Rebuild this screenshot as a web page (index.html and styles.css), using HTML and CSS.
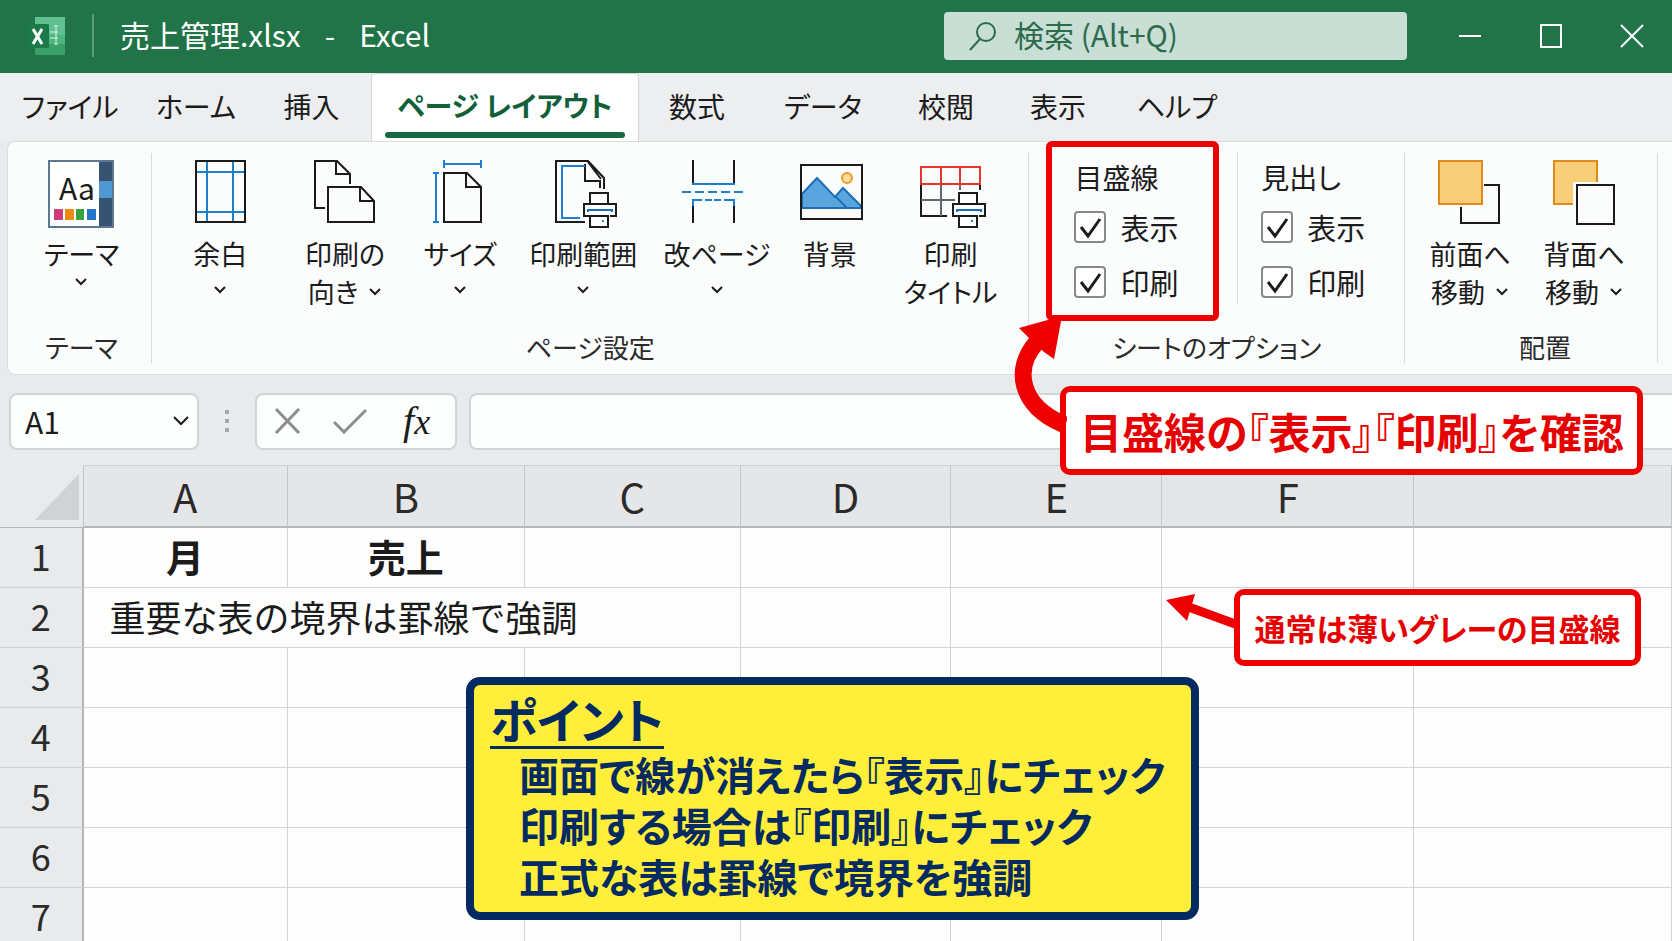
FILE: index.html
```html
<!DOCTYPE html>
<html lang="ja">
<head>
    <meta charset="UTF-8">
    <meta name="viewport" content="width=device-width, initial-scale=1.0">
    <title>売上管理.xlsx - Excel</title>
    <link rel="stylesheet" href="styles.css">
</head>
<body>
    <svg class="defs" aria-hidden="true">
        <symbol id="chevron" viewBox="0 0 14 10"><path d="M2 2l5 5 5-5" fill="none" stroke="currentColor" stroke-width="2"/></symbol>
        <symbol id="printer" viewBox="0 0 36 38">
            <path d="M8 12V2h18v10M8 25H2V13h32v12h-6M8 25h18v11H8z" fill="#fff" stroke="#1b1b1b" stroke-width="2"/>
            <path d="M6 21v-2h24v2" fill="none" stroke="#1b6fb8" stroke-width="2"/>
            <path d="M20 30h2" stroke="#2a86d1" stroke-width="2"/>
        </symbol>
    </svg>

    <header class="title-bar">
        <svg class="logo" viewBox="0 0 40 40" aria-hidden="true">
            <rect x="9" y="1" width="30" height="38" rx="1" fill="#4cb47e"/>
            <rect x="9" y="1" width="30" height="18" fill="#5fc191"/>
            <rect x="9" y="28" width="30" height="11" fill="#3a9f69"/>
            <rect x="1" y="8" width="22" height="24" rx="1" fill="#1c7a49"/>
            <path d="M30 10v18M28 10h4M28 28h4M24 16h8M24 22h8" stroke="#e0f3e8" stroke-width="1"/>
            <path d="M7 13l9 15M16 13L7 28" stroke="#fff" stroke-width="3"/>
        </svg>
        <span class="divider"></span>
        <span class="file-name">売上管理.xlsx</span>
        <span class="dash">-</span>
        <span class="app-name">Excel</span>
        <label class="search">
            <svg viewBox="0 0 30 30" aria-hidden="true"><circle cx="18" cy="11" r="9"/><path d="M12 18L2 29"/></svg>
            <input type="search" placeholder="検索 (Alt+Q)" aria-label="検索">
        </label>
        <div class="window-buttons">
            <button type="button" aria-label="最小化"><svg viewBox="0 0 24 24"><path d="M1 12h22"/></svg></button>
            <button type="button" aria-label="最大化"><svg viewBox="0 0 24 24"><path d="M2 1h20v22H2z"/></svg></button>
            <button type="button" aria-label="閉じる"><svg viewBox="0 0 24 24"><path d="M1 1l22 22M23 1L1 23"/></svg></button>
        </div>
    </header>

    <nav class="tabs">
        <button type="button">ファイル</button>
        <button type="button">ホーム</button>
        <button type="button">挿入</button>
        <button type="button" class="active">ページ レイアウト</button>
        <button type="button">数式</button>
        <button type="button">データ</button>
        <button type="button">校閲</button>
        <button type="button">表示</button>
        <button type="button">ヘルプ</button>
    </nav>

    <section class="ribbon">
        <div class="group group-theme">
            <div class="tools">
                <button type="button" class="tool">
                    <svg class="icon" viewBox="0 0 72 72">
                        <rect x="4" y="3" width="64" height="66" fill="#fff" stroke="#5c7890" stroke-width="2"/>
                        <rect x="54" y="4" width="13" height="64" fill="#365472"/>
                        <rect x="54" y="23" width="13" height="17" fill="#4f98d3"/>
                        <text x="14" y="42" class="theme-sample">Aa</text>
                        <rect x="9" y="51" width="9" height="11" fill="#cf3c7c"/>
                        <rect x="20" y="51" width="9" height="11" fill="#ee8a13"/>
                        <rect x="31" y="51" width="8" height="11" fill="#3aa13f"/>
                        <rect x="42" y="51" width="9" height="11" fill="#2377c6"/>
                    </svg>
                    <span>テーマ</span>
                    <span class="more"><svg class="chevron"><use href="#chevron"/></svg></span>
                </button>
            </div>
            <div class="group-label">テーマ</div>
        </div>

        <div class="group group-page">
            <div class="tools">
                <button type="button" class="tool">
                    <svg class="icon" viewBox="0 0 72 72">
                        <path class="blue" d="M23 3v61M49 3v61M12 14h49M12 54h49"/>
                        <rect class="ink" x="12" y="3" width="49" height="61"/>
                    </svg>
                    <span>余白</span>
                    <span class="more"><svg class="chevron"><use href="#chevron"/></svg></span>
                </button>
                <button type="button" class="tool">
                    <svg class="icon" viewBox="0 0 72 72">
                        <path class="ink" d="M16 50H6V3h22l13 13v10M27 3v13h14"/>
                        <path class="ink" d="M19 29h33l13 14v21H19zM51 29v14h14"/>
                    </svg>
                    <span>印刷の</span>
                    <span>向き<svg class="chevron"><use href="#chevron"/></svg></span>
                </button>
                <button type="button" class="tool">
                    <svg class="icon" viewBox="0 0 72 72">
                        <path class="ink" d="M20 15h23l14 14v35H20zM42 15v14h15"/>
                        <path class="blue" d="M20 6h37M20 2v8M57 2v8M12 15v49M9 15h6M9 64h6"/>
                    </svg>
                    <span>サイズ</span>
                    <span class="more"><svg class="chevron"><use href="#chevron"/></svg></span>
                </button>
                <button type="button" class="tool">
                    <svg class="icon" viewBox="0 0 72 72">
                        <path class="ink" d="M38 64H9V3h32l16 17v11M38 6v17h15v7M41 4l13 17"/>
                        <path class="blue" d="M38 8H15v52h18"/>
                        <use href="#printer" x="35" y="33" width="36" height="38"/>
                    </svg>
                    <span>印刷範囲</span>
                    <span class="more"><svg class="chevron"><use href="#chevron"/></svg></span>
                </button>
                <button type="button" class="tool">
                    <svg class="icon" viewBox="0 0 72 72">
                        <path class="ink" d="M12 2v24M53 2v24M12 46v19M53 46v19"/>
                        <path class="blue" d="M11 26h43M12 48v-6h9M24 42h7M33 42h7M43 42h10v6"/>
                        <path class="blue" d="M1 34h61" stroke-dasharray="9 4"/>
                    </svg>
                    <span>改ページ</span>
                    <span class="more"><svg class="chevron"><use href="#chevron"/></svg></span>
                </button>
                <button type="button" class="tool">
                    <svg class="icon" viewBox="0 0 72 72">
                        <path d="M8 36l15-16 18 19 8-9 18 18v2H8z" fill="#5ba5df" stroke="#1b6fb8" stroke-width="2"/>
                        <path d="M41 38l12 12" stroke="#1b6fb8" stroke-width="2"/>
                        <circle cx="53" cy="20" r="5" fill="#fbdc9c" stroke="#ee9a2d" stroke-width="2"/>
                        <rect class="ink" x="7" y="7" width="61" height="54"/>
                    </svg>
                    <span>背景</span>
                </button>
                <button type="button" class="tool">
                    <svg class="icon" viewBox="0 0 72 72">
                        <path class="ink" d="M6 26v32h26M65 26v6"/>
                        <path d="M26 26v32M45 26v6M6 42h34" fill="none" stroke="#62666b" stroke-width="2"/>
                        <path d="M6 9h59v17H6zM26 9v17M45 9v17" fill="none" stroke="#e5352c" stroke-width="2"/>
                        <use href="#printer" x="36" y="33" width="36" height="38"/>
                    </svg>
                    <span>印刷</span>
                    <span>タイトル</span>
                </button>
            </div>
            <div class="group-label">ページ設定</div>
        </div>

        <div class="group group-sheet">
            <div class="tools">
                <fieldset class="options highlighted">
                    <legend>目盛線</legend>
                    <label><input type="checkbox" checked>表示</label>
                    <label><input type="checkbox" checked>印刷</label>
                </fieldset>
                <fieldset class="options">
                    <legend>見出し</legend>
                    <label><input type="checkbox" checked>表示</label>
                    <label><input type="checkbox" checked>印刷</label>
                </fieldset>
            </div>
            <div class="group-label">シートのオプション</div>
            <div class="callout callout-main">
                <svg class="curved-arrow" viewBox="0 0 60 120" aria-hidden="true">
                    <path d="M30 30C6 56 12 94 58 113" fill="none" stroke="#ee0000" stroke-width="17"/>
                    <path d="M55 4L12 16l10 10 15 14 10 7z" fill="#ee0000"/>
                </svg>
                目盛線の『表示』『印刷』を確認
            </div>
        </div>

        <div class="group group-arrange">
            <div class="tools">
                <button type="button" class="tool">
                    <svg class="icon" viewBox="0 0 72 72">
                        <path class="ink" d="M50 27h15v38H27V49"/>
                        <rect class="orange" x="5" y="3" width="43" height="43"/>
                    </svg>
                    <span>前面へ</span>
                    <span>移動<svg class="chevron"><use href="#chevron"/></svg></span>
                </button>
                <button type="button" class="tool">
                    <svg class="icon" viewBox="0 0 72 72">
                        <rect class="orange" x="6" y="3" width="43" height="43"/>
                        <rect x="25" y="24" width="44" height="44" fill="#fbfcfc"/>
                        <rect class="ink" x="29" y="27" width="37" height="39"/>
                    </svg>
                    <span>背面へ</span>
                    <span>移動<svg class="chevron"><use href="#chevron"/></svg></span>
                </button>
            </div>
            <div class="group-label">配置</div>
        </div>
        <div class="group"></div>
    </section>

    <div class="formula-bar">
        <div class="box name-box">
            <input type="text" value="A1" aria-label="名前ボックス">
            <button type="button" aria-label="名前の一覧"><svg viewBox="0 0 16 12"><path d="M1 2l7 7 7-7"/></svg></button>
        </div>
        <span class="grip"><i></i><i></i><i></i></span>
        <div class="box formula-buttons">
            <button type="button" aria-label="キャンセル"><svg viewBox="0 0 34 26"><path d="M5 1l23 24M28 1L5 25"/></svg></button>
            <button type="button" aria-label="入力"><svg viewBox="0 0 34 26"><path d="M1 14l10 10L33 2"/></svg></button>
            <button type="button" class="fx" aria-label="関数の挿入"><span>f</span><small>x</small></button>
        </div>
        <input type="text" class="box formula-input" aria-label="数式バー">
    </div>

    <main class="sheet">
        <table>
            <colgroup>
                <col class="col-head"><col class="col-a"><col class="col-b"><col class="col-c"><col class="col-d"><col class="col-e"><col class="col-f"><col>
            </colgroup>
            <thead>
                <tr><th class="corner"><svg viewBox="0 0 44 46" aria-hidden="true"><path d="M44 0v46H0z" fill="#d0d2d4"/></svg></th><th>A</th><th>B</th><th>C</th><th>D</th><th>E</th><th>F</th><th></th></tr>
            </thead>
            <tbody>
                <tr><th>1</th><td class="title">月</td><td class="title">売上</td><td></td><td></td><td></td><td></td><td></td></tr>
                <tr><th>2</th><td colspan="3" class="note">重要な表の境界は罫線で強調</td><td></td><td></td><td></td><td></td></tr>
                <tr><th>3</th><td></td><td></td><td></td><td></td><td></td><td></td><td></td></tr>
                <tr><th>4</th><td></td><td></td><td></td><td></td><td></td><td></td><td></td></tr>
                <tr><th>5</th><td></td><td></td><td></td><td></td><td></td><td></td><td></td></tr>
                <tr><th>6</th><td></td><td></td><td></td><td></td><td></td><td></td><td></td></tr>
                <tr><th>7</th><td></td><td></td><td></td><td></td><td></td><td></td><td></td></tr>
            </tbody>
        </table>

        <div class="callout callout-grid">
            <svg class="straight-arrow" viewBox="0 0 72 40" aria-hidden="true">
                <path d="M20 12l52 19" stroke="#ee0000" stroke-width="9"/>
                <path d="M0 6l29-6-8 27z" fill="#ee0000"/>
            </svg>
            通常は薄いグレーの目盛線
        </div>

        <aside class="point">
            <h2>ポイント</h2>
            <p>画面で線が消えたら『表示』にチェック</p>
            <p>印刷する場合は『印刷』にチェック</p>
            <p>正式な表は罫線で境界を強調</p>
        </aside>
    </main>
</body>
</html>
```
FILE: styles.css
```css
* { box-sizing: border-box; }
html { height: 100%; overflow: hidden; }
body { margin: 0; height: 100%; overflow: hidden; display: flex; flex-direction: column; background: #e9eaec; color: #1b1b1b; font-family: "Noto Sans CJK JP", sans-serif; font-size: 28px; font-feature-settings: "palt"; }
button, input { font: inherit; font-feature-settings: inherit; color: inherit; }
button { padding: 0; background: none; border: none; cursor: pointer; }
.defs { position: absolute; width: 0; height: 0; }

/* title bar */
.title-bar { display: flex; align-items: center; height: 73px; flex: none; padding: 0 20px 2px 26px; background: #217348; color: #fff; font-size: 30px; font-feature-settings: normal; }
.logo { width: 40px; height: 40px; }
.divider { width: 2px; height: 43px; margin: 0 26px; background: #5d9a79; }
.file-name, .dash, .app-name { padding-bottom: 3px; }
.dash { margin: 0 24px; }
.search { display: flex; align-items: center; gap: 16px; width: 463px; height: 48px; margin-left: auto; padding: 0 24px; background: #c9ded4; border-radius: 4px; color: #2c6b4c; }
.search svg { width: 30px; height: 30px; flex: none; fill: none; stroke: #2c6b4c; stroke-width: 2; }
.search input { width: 100%; padding: 0 0 3px; background: none; border: none; outline: none; }
.search input::placeholder { color: #2c6b4c; opacity: 1; }
.window-buttons { display: flex; margin-left: 22px; }
.window-buttons button { display: flex; justify-content: center; width: 81px; }
.window-buttons button:last-child { margin-right: -20px; }
.window-buttons svg { width: 24px; height: 24px; fill: none; stroke: #fff; stroke-width: 2; }

/* tabs */
.tabs { display: grid; grid-template-columns: 140fr 112fr 119fr 268fr 116fr 136fr 110fr 114fr 124fr 433fr; height: 68px; flex: none; background: #edeef0; }
.tabs button { padding-bottom: 3px; font-size: 28px; white-space: nowrap; }
.tabs .active { display: flex; flex-direction: column; justify-content: flex-end; align-items: center; padding: 0 13px 3px; background: #fff; border: 1px solid #d3d5d8; border-bottom: none; border-radius: 4px 4px 0 0; color: #11603a; font-weight: 700; line-height: 54px; }
.tabs .active::after { content: ""; width: 100%; height: 6px; border-radius: 3px; background: #17693f; }

/* ribbon */
.ribbon { display: grid; grid-template-columns: 143fr 878fr 376fr 253fr 15fr; height: 234px; flex: none; margin-left: 7px; background: #fbfcfc; border: 1px solid #d9dbde; border-right: none; border-radius: 8px 0 0 8px; }
.group { position: relative; display: flex; flex-direction: column; min-width: 0; margin: 11px 0; border-left: 1px solid #d9dbde; }
.group-theme { border-left: none; padding-left: 4px; }
.tools { display: grid; flex: 1; align-items: start; }
.group-page .tools { grid-template-columns: 125fr 125fr 106fr 140fr 128fr 98fr 144fr; padding: 0 6px; }
.group-sheet .tools { grid-template-columns: 173fr 167fr; padding-left: 17px; column-gap: 18px; }
.group-arrange .tools { grid-template-columns: 1fr 1fr; padding: 0 16px 0 8px; }
.group-label { line-height: 32px; text-align: center; color: #2b2b2b; font-size: 26px; }
.group-arrange .group-label { padding-left: 28px; }
.tool { display: flex; flex-direction: column; align-items: center; padding-top: 5px; line-height: 38px; font-size: 27px; white-space: nowrap; }
.tool span { display: flex; align-items: center; gap: 10px; }
.tool .more { height: 34px; }
.group-theme .more { height: 18px; }
.icon { width: 72px; height: 72px; margin-bottom: 5px; }
.icon .ink { fill: none; stroke: #1b1b1b; stroke-width: 2; }
.icon .blue { fill: none; stroke: #1c7fd0; stroke-width: 2; }
.icon .orange { fill: #f9ce78; stroke: #e08a1e; stroke-width: 2; }
.theme-sample { font-size: 30px; fill: #1b1b1b; }
.chevron { width: 14px; height: 10px; }

.options { display: flex; flex-direction: column; min-width: 0; height: 150px; margin: 0; padding: 5px 0 0 23px; border: none; border-left: 1px solid #d9dbde; font-size: 29px; }
.options legend { float: left; flex: none; padding: 0 0 3px; font-size: 28px; line-height: 38px; }
.options label { display: flex; align-items: center; gap: 14px; flex: none; height: 55px; line-height: 50px; }
.options input { appearance: none; width: 32px; height: 32px; margin: 0; border: 2px solid #85888c; border-radius: 4px; background: #fff url("data:image/svg+xml,%3Csvg xmlns='http://www.w3.org/2000/svg' viewBox='0 0 28 28'%3E%3Cpath d='M5 14l7 9L24 6' fill='none' stroke='%231b1b1b' stroke-width='3'/%3E%3C/svg%3E") center / 100%; }
.options.highlighted { height: 180px; margin-top: -12px; padding: 11px 0 0 22px; border: 6px solid #ee0000; border-radius: 6px; }

/* formula bar */
.formula-bar { display: flex; align-items: center; height: 90px; flex: none; padding: 2px 0 0 9px; font-size: 30px; }
.box { height: 57px; background: #fdfefe; border: 2px solid #d2d4d8; border-radius: 8px; }
.name-box { display: flex; align-items: center; width: 190px; padding: 0 8px 0 14px; }
.name-box input { width: 100%; padding: 0; border: none; background: none; outline: none; }
.name-box svg { display: block; width: 16px; height: 12px; fill: none; stroke: #1b1b1b; stroke-width: 2; }
.grip { display: flex; flex-direction: column; gap: 5px; margin: 0 26px; }
.grip i { width: 4px; height: 4px; background: #a5a7aa; }
.formula-buttons { display: flex; gap: 28px; align-items: center; width: 202px; margin-right: 12px; padding-left: 14px; }
.formula-buttons svg { display: block; width: 34px; height: 26px; fill: none; stroke: #8b8d90; stroke-width: 3; }
.fx { padding-left: 8px; font: italic 40px/50px "Liberation Serif", serif; }
.fx small { font-size: 36px; }
.formula-input { flex: 1; min-width: 0; padding: 0 12px; border-right: none; border-radius: 8px 0 0 8px; outline: none; }

/* sheet */
.sheet { position: relative; flex: 1; min-height: 0; }
table { width: 100%; table-layout: fixed; border-collapse: separate; border-spacing: 0; font-size: 36px; font-feature-settings: normal; }
.col-head { width: 5%; }
.col-a { width: 12.2%; }
.col-b { width: 14.2%; }
.col-c { width: 12.9%; }
.col-d { width: 12.6%; }
.col-e { width: 12.6%; }
.col-f { width: 15.1%; }
th, td { height: 60px; padding: 0 0 4px; line-height: 40px; border: solid #d0d3d8; border-width: 0 1px 1px 0; }
td { background: #fefefe; }
th { font-weight: 400; color: #2b2b2b; background: #e9eaec; }
tbody th { padding-bottom: 6px; border-right: 2px solid #b4b6ba; border-bottom-color: #cfd1d4; }
thead th { height: 63px; padding: 0; font-size: 40px; background: #e5e6e8; border-top: 1px solid #cfd1d4; border-bottom: 2px solid #b4b6ba; border-right-color: #c4c6ca; }
thead .corner { padding: 0 4px 7px 0; vertical-align: bottom; background: #e9eaec; border-top-color: transparent; border-bottom-width: 1px; }
.corner svg { display: block; width: 44px; height: 46px; margin-left: auto; }
.title { font-size: 38px; font-weight: 700; text-align: center; }
.note { padding-left: 26px; }

/* notes laid over the sheet */
.callout { position: absolute; z-index: 2; border: 6px solid #ee0000; border-radius: 10px; background: #fff; color: #e60000; font-weight: 700; white-space: nowrap; text-align: center; }
.callout-main { top: 233px; left: 31px; width: 583px; font-size: 42px; line-height: 77px; }
.curved-arrow { position: absolute; left: -59px; bottom: 37px; width: 60px; height: 120px; }
.callout-grid { top: 124px; right: 31px; width: 407px; font-size: 31px; line-height: 65px; }
.straight-arrow { position: absolute; top: -1px; left: -74px; width: 72px; height: 40px; }
.point { position: absolute; z-index: 1; top: 212px; left: 466px; width: 733px; height: 243px; padding: 6px 16px; border: 8px solid #032a61; border-radius: 14px; background: #ffee3a; color: #032a61; font-size: 40px; font-weight: 700; white-space: nowrap; }
.point h2 { width: fit-content; margin: 0; border-bottom: 3px solid #032a61; font-size: 48px; line-height: 55px; }
.point p { margin: 0; padding-left: 29px; line-height: 51px; }
```
